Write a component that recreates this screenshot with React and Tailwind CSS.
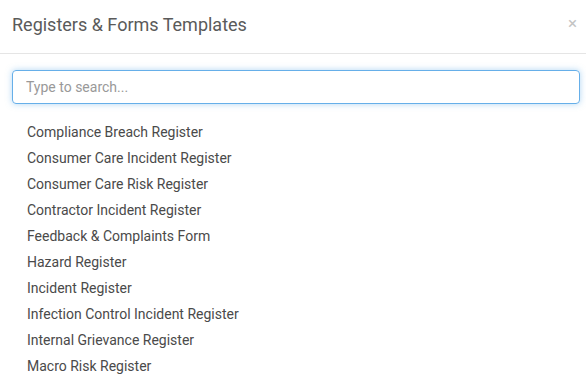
import React from 'react';

const templates = [
  'Compliance Breach Register',
  'Consumer Care Incident Register',
  'Consumer Care Risk Register',
  'Contractor Incident Register',
  'Feedback & Complaints Form',
  'Hazard Register',
  'Incident Register',
  'Infection Control Incident Register',
  'Internal Grievance Register',
  'Macro Risk Register',
];

export default function App() {
  return (
    <div className="w-[586px] h-[385px] overflow-hidden bg-white font-['Roboto',sans-serif]">
      {/* header */}
      <div className="h-[54px] flex items-center justify-between pl-3 pr-[9px] border-b border-[#e5e5e5]">
        <h4 className="text-[18px] text-[#5a5a5a] leading-none -mt-[4px]">Registers &amp; Forms Templates</h4>
        <button className="text-[#c4c4c4] text-[17px] leading-none -mt-[7px]">&times;</button>
      </div>

      {/* body */}
      <div className="pl-3 pr-[6px] pt-4">
        <input
          autoFocus
          placeholder="Type to search..."
          className="w-full h-[34px] px-[13px] text-[14px] text-[#555] placeholder:text-[#999] border border-[#66afe9] rounded-[4px] outline-none shadow-[0_0_6px_rgba(102,175,233,0.5)]"
        />
        <ul className="mt-[15px] pl-[15px]">
          {templates.map((t) => (
            <li key={t} className="h-[26px] flex items-center text-[14px] text-[#4a4a4a]">
              {t}
            </li>
          ))}
        </ul>
      </div>
    </div>
  );
}
